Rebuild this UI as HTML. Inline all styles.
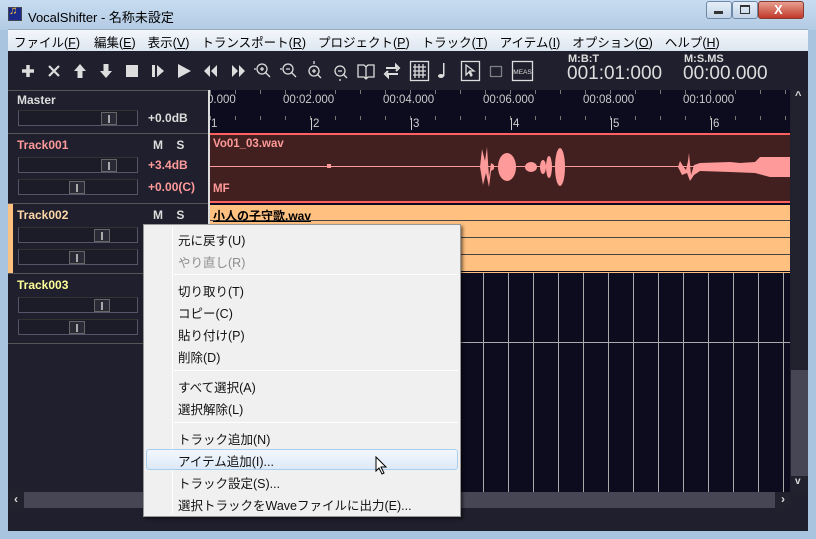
<!DOCTYPE html>
<html><head><meta charset="utf-8"><style>
*{margin:0;padding:0;box-sizing:border-box}
body{width:816px;height:539px;overflow:hidden;position:relative;font-family:"Liberation Sans","Noto Sans CJK JP",sans-serif;background:#a9c4de}
.a{position:absolute}
.t{font-size:12px;white-space:nowrap}
.sl{position:absolute;width:120px;height:16px;border:1px solid #55556a;border-top-color:#333;background:#1c1c28}
.sl i{position:absolute;top:1px;width:16px;height:13px;background:#2a2a36;border:1px solid #666}
.sl i:after{content:"";position:absolute;left:6px;top:2px;width:2px;height:8px;background:#aaa}
.mi{position:absolute;left:34px;font-size:12.5px;color:#111;white-space:nowrap}
.sep{position:absolute;left:30px;right:2px;height:1px;background:#d5d5d5;border-bottom:1px solid #fff}
</style></head><body>
<div class="a" style="left:0;top:0;width:816px;height:30px;background:linear-gradient(#c7dcf0,#b3cbe4)"></div>
<div class="a" style="left:8px;top:7px;width:14px;height:14px;background:#1a2a8a;border:1px solid #445"></div>
<div class="a t" style="left:9px;top:5px;color:#ffcc33;font-size:11px">♫</div>
<div class="a t" style="left:28px;top:7px;font-size:13px;color:#000">VocalShifter - 名称未設定</div>
<div class="a" style="left:706px;top:1px;width:26px;height:18px;border:1px solid #6e8aa8;border-radius:3px;background:linear-gradient(#e6eff8,#c2d4e8)"></div>
<div class="a" style="left:714px;top:11px;width:9px;height:3px;background:#333"></div>
<div class="a" style="left:732px;top:1px;width:26px;height:18px;border:1px solid #6e8aa8;border-radius:3px;background:linear-gradient(#e6eff8,#c2d4e8)"></div>
<div class="a" style="left:740px;top:5px;width:10px;height:9px;border:1px solid #333;border-top-width:2px"></div>
<div class="a" style="left:758px;top:1px;width:46px;height:18px;border:1px solid #8a3a30;border-radius:3px;background:linear-gradient(#e8a090,#c0392b)"></div>
<div class="a t" style="left:774px;top:2px;color:#fff;font-weight:bold;font-size:13px">X</div>
<div class="a" style="left:8px;top:29px;width:800px;height:22px;background:linear-gradient(#f4f7fb,#dde6f0);border-top:1px solid #9ab"></div>
<div class="a t" style="left:14px;top:32px;font-size:12.5px;color:#000">
<span style="margin-right:14px">ファイル(<u>F</u>)</span><span style="margin-right:12px">編集(<u>E</u>)</span><span style="margin-right:12px">表示(<u>V</u>)</span><span style="margin-right:12px">トランスポート(<u>R</u>)</span><span style="margin-right:12px">プロジェクト(<u>P</u>)</span><span style="margin-right:12px">トラック(<u>T</u>)</span><span style="margin-right:12px">アイテム(<u>I</u>)</span><span style="margin-right:12px">オプション(<u>O</u>)</span><span>ヘルプ(<u>H</u>)</span></div>
<div class="a" style="left:8px;top:51px;width:800px;height:480px;background:#1f1f2d"></div>
<svg class="a" style="left:0;top:55px" width="560" height="32" fill="#ddd" stroke="#ddd">
<g stroke-width="3.5"><path d="M28 10v12M22 16h12"/></g>
<g stroke-width="2.2"><path d="M49 11l10 10M59 11l-10 10"/></g>
<path stroke="none" d="M80 9l6 7h-3.5v7h-5v-7h-3.5z"/>
<path stroke="none" d="M106 23l6-7h-3.5v-7h-5v7h-3.5z"/>
<rect stroke="none" x="126" y="10" width="12" height="12"/>
<rect stroke="none" x="152" y="10" width="3" height="12"/><path stroke="none" d="M157 10l7 6-7 6z"/>
<path stroke="none" d="M178 9l13 7-13 7z"/>
<path stroke="none" d="M210 10l-6 6 6 6zM217 10l-6 6 6 6z"/>
<path stroke="none" d="M232 10l6 6-6 6zM239 10l6 6-6 6z"/>
<g fill="none" stroke-width="1.3">
<circle cx="262" cy="14" r="5"/><path d="M265 17l5 5M260 14h4M262 12v4M254 14h2"/>
<circle cx="288" cy="14" r="5"/><path d="M291 17l5 5M286 14h4M280 14h2"/>
<circle cx="314" cy="16" r="5"/><path d="M317 19l4 4M312 16h4M314 14v4M314 6v3"/>
<circle cx="340" cy="16" r="5"/><path d="M343 19l4 4M338 16h4M340 26v-2"/>
<path d="M358 10h6l2 2 2-2h6v12h-6l-2 2-2-2h-6z M366 12v12"/>
<path d="M386 13h10v-3l3 3-3 3M398 19h-10v3l-3-3 3-3" stroke-width="2"/>
<rect x="410.5" y="6.5" width="18" height="19"/><path d="M415 9v14M419 9v14M423 9v14M413 12h13M413 16h13M413 20h13"/>
<rect x="461.5" y="6.5" width="18" height="19"/><path d="M466 10v10l3-3 2 4 1-1-2-4h4z"/>
<rect x="490.5" y="11.5" width="11" height="10" stroke-dasharray="1 1"/>
<rect x="512.5" y="6.5" width="20" height="19"/></g>
<path stroke="none" d="M443 8h1.5v13h-1.5z"/><ellipse stroke="none" cx="441" cy="21" rx="3" ry="2"/>
<text x="522.5" y="19" font-size="6.5" font-family="Liberation Sans" stroke="none" text-anchor="middle">MEAS</text>
</svg>
<div class="a t" style="left:568px;top:53px;color:#ddd;font-size:11px;font-weight:bold">M:B:T</div>
<div class="a t" style="left:567px;top:63px;color:#ddd;font-size:19px">001:01:000</div>
<div class="a t" style="left:684px;top:53px;color:#ddd;font-size:11px;font-weight:bold">M:S.MS</div>
<div class="a t" style="left:683px;top:63px;color:#ddd;font-size:19px">00:00.000</div>
<div class="a" style="left:8px;top:90px;width:200px;height:1px;background:#555"></div>
<div class="a t" style="left:17px;top:93px;color:#ddd;font-weight:bold">Master</div>
<div class="sl" style="left:18px;top:110px"><i style="left:82px"></i></div>
<div class="a t" style="left:148px;top:111px;color:#ddd;font-weight:bold">+0.0dB</div>
<div class="a" style="left:8px;top:133px;width:200px;height:1px;background:#555"></div>
<div class="a t" style="left:17px;top:138px;color:#ff9a9a;font-weight:bold">Track001</div>
<div class="a t" style="left:153px;top:138px;color:#ddd;font-weight:bold">M&nbsp;&nbsp;&nbsp;&nbsp;S</div>
<div class="sl" style="left:18px;top:157px"><i style="left:82px"></i></div>
<div class="a t" style="left:148px;top:158px;color:#ff9a9a;font-weight:bold">+3.4dB</div>
<div class="sl" style="left:18px;top:179px"><i style="left:50px"></i></div>
<div class="a t" style="left:148px;top:180px;color:#ff9a9a;font-weight:bold">+0.00(C)</div>
<div class="a" style="left:8px;top:203px;width:200px;height:1px;background:#555"></div>
<div class="a" style="left:8px;top:204px;width:5px;height:69px;background:#ffc080"></div>
<div class="a t" style="left:17px;top:208px;color:#ffd8a8;font-weight:bold">Track002</div>
<div class="a t" style="left:153px;top:208px;color:#ddd;font-weight:bold">M&nbsp;&nbsp;&nbsp;&nbsp;S</div>
<div class="sl" style="left:18px;top:227px"><i style="left:75px"></i></div>
<div class="sl" style="left:18px;top:249px"><i style="left:50px"></i></div>
<div class="a" style="left:8px;top:273px;width:200px;height:1px;background:#555"></div>
<div class="a t" style="left:17px;top:278px;color:#ffff99;font-weight:bold">Track003</div>
<div class="sl" style="left:18px;top:297px"><i style="left:75px"></i></div>
<div class="sl" style="left:18px;top:319px"><i style="left:50px"></i></div>
<div class="a" style="left:8px;top:343px;width:200px;height:1px;background:#555"></div>
<div class="a" style="left:208px;top:90px;width:2px;height:402px;background:#ddd"></div>
<div class="a" style="left:210px;top:90px;width:580px;height:402px;background:#0c0c1e;overflow:hidden">
 <div class="a" style="left:0;top:0;width:580px;height:43px;background:repeating-linear-gradient(90deg,#777 0 1px,transparent 1px 25px);-webkit-mask:linear-gradient(#000 0 4px,transparent 4px 26px,#000 26px 30px,transparent 30px)"></div>
 <div class="a t" style="left:0;top:4px;color:#ccc;font-size:11.5px;width:600px">
 <span class="a" style="left:-3px">0.000</span><span class="a" style="left:73px">00:02.000</span><span class="a" style="left:173px">00:04.000</span><span class="a" style="left:273px">00:06.000</span><span class="a" style="left:373px">00:08.000</span><span class="a" style="left:473px">00:10.000</span></div>
 <div class="a t" style="left:0;top:28px;color:#ccc;font-size:11.5px;width:600px">
 <span class="a" style="left:1px">1</span><span class="a" style="left:101px;border-left:1px solid #ccc;padding-left:1px">2</span><span class="a" style="left:201px;border-left:1px solid #ccc;padding-left:1px">3</span><span class="a" style="left:301px;border-left:1px solid #ccc;padding-left:1px">4</span><span class="a" style="left:401px;border-left:1px solid #ccc;padding-left:1px">5</span><span class="a" style="left:501px;border-left:1px solid #ccc;padding-left:1px">6</span></div>
 <div class="a" style="left:0;top:43px;width:580px;height:70px;background:#42201f;border-top:2px solid #ff6060;border-bottom:2px solid #ff6060"></div>
 <div class="a" style="left:0;top:76px;width:580px;height:1px;background:#ff9a9a"></div>
 <div class="a" style="left:117px;top:74px;width:4px;height:4px;background:#ff9a9a"></div>
 <svg class="a" style="left:0;top:45px" width="580" height="66"><g fill="#ff9a9a">
 <path d="M270 32 L272 14 L275 26 L277 12 L279 42 L281 28 L284 30 L284 34 L281 36 L279 52 L276 38 L273 50Z"/>
 <ellipse cx="297" cy="32" rx="9" ry="14"/><ellipse cx="321" cy="32" rx="6" ry="5"/><ellipse cx="333" cy="32" rx="3" ry="7"/><ellipse cx="339" cy="32" rx="3" ry="11"/><ellipse cx="350" cy="32" rx="5" ry="19"/>
 <path d="M468 32 L470 26 L473 31 L476 35 L478 26 L479 18 L481 40 L484 30 L490 28 L520 27 L530 28 L545 27 L550 22 L580 22 L580 42 L560 42 L545 38 L520 37 L490 36 L484 40 L480 46 L477 38 L472 40Z"/></g></svg>
 <div class="a t" style="left:3px;top:48px;color:#ff9a9a;font-weight:bold;font-size:11.5px">Vo01_03.wav</div>
 <div class="a t" style="left:3px;top:93px;color:#ff9a9a;font-weight:bold;font-size:11.5px">MF</div>
 <div class="a" style="left:0;top:113px;width:580px;height:70px;background:#ffc080;border-top:2px solid #0c0c1e"></div>
 <div class="a" style="left:0;top:181px;width:580px;height:1px;background:#0c0c1e"></div>
 <div class="a" style="left:0;top:130px;width:580px;height:1px;background:#444"></div>
 <div class="a" style="left:0;top:147px;width:580px;height:1px;background:#444"></div>
 <div class="a" style="left:0;top:164px;width:580px;height:1px;background:#444"></div>
 <div class="a t" style="left:3px;top:117px;color:#000;font-weight:bold;font-size:12px;text-decoration:underline">小人の子守歌.wav</div>
 <div class="a" style="left:0;top:183px;width:580px;height:220px;background:repeating-linear-gradient(90deg,transparent 0 23px,#aaa 23px 24px,transparent 24px 25px)"></div>
 <div class="a" style="left:0;top:252px;width:580px;height:1px;background:#aaa"></div>
</div>
<div class="a" style="left:791px;top:90px;width:17px;height:402px;background:#22222e"></div>
<div class="a" style="left:791px;top:370px;width:17px;height:106px;background:#464655"></div>
<div class="a t" style="left:795px;top:90px;color:#ddd;font-size:11px;font-weight:bold">^</div>
<div class="a t" style="left:795px;top:476px;color:#ddd;font-size:10px;font-weight:bold">v</div>
<div class="a" style="left:8px;top:492px;width:783px;height:16px;background:#464655"></div>
<div class="a" style="left:8px;top:492px;width:16px;height:16px;background:#22222e;color:#ddd;font-size:12px;font-weight:bold;text-align:center">‹</div>
<div class="a" style="left:775px;top:492px;width:16px;height:16px;background:#22222e;color:#ddd;font-size:12px;font-weight:bold;text-align:center">›</div>
<div class="a" style="left:143px;top:224px;width:318px;height:293px;background:#f0f0f0;border:1px solid #979797;box-shadow:2px 2px 3px rgba(0,0,0,.5)">
 <div class="a" style="left:28px;top:2px;width:1px;height:287px;background:#e0e0e0;border-right:1px solid #fff"></div>
 <div class="mi" style="top:5px">元に戻す(U)</div>
 <div class="mi" style="top:27px;color:#8d8d8d">やり直し(R)</div>
 <div class="sep" style="top:49px"></div>
 <div class="mi" style="top:56px">切り取り(T)</div>
 <div class="mi" style="top:78px">コピー(C)</div>
 <div class="mi" style="top:100px">貼り付け(P)</div>
 <div class="mi" style="top:122px">削除(D)</div>
 <div class="sep" style="top:145px"></div>
 <div class="mi" style="top:152px">すべて選択(A)</div>
 <div class="mi" style="top:174px">選択解除(L)</div>
 <div class="sep" style="top:197px"></div>
 <div class="mi" style="top:204px">トラック追加(N)</div>
 <div class="a" style="left:2px;top:224px;width:312px;height:21px;border:1px solid #a8cfee;border-radius:3px;background:linear-gradient(#f2f7fd,#dde9f7)"></div>
 <div class="mi" style="top:226px">アイテム追加(I)...</div>
 <div class="mi" style="top:248px">トラック設定(S)...</div>
 <div class="mi" style="top:270px">選択トラックをWaveファイルに出力(E)...</div>
</div>
<svg class="a" style="left:375px;top:456px" width="14" height="20"><path d="M1 1 L1 15 L4 12 L7 18 L9 17 L6 11 L11 11Z" fill="#fff" stroke="#000"/></svg>
</body></html>
